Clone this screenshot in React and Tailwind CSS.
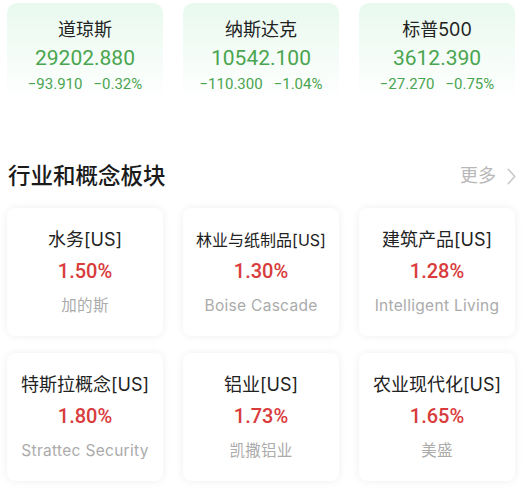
import React from 'react';

const indices = [
    { name: '道琼斯', value: '29202.880', change: '−93.910', pct: '−0.32%' },
    { name: '纳斯达克', value: '10542.100', change: '−110.300', pct: '−1.04%' },
    { name: '标普500', value: '3612.390', change: '−27.270', pct: '−0.75%' },
];

const sectors = [
    { name: '水务[US]', pct: '1.50%', lead: '加的斯' },
    { name: '林业与纸制品[US]', pct: '1.30%', lead: 'Boise Cascade', small: true },
    { name: '建筑产品[US]', pct: '1.28%', lead: 'Intelligent Living' },
    { name: '特斯拉概念[US]', pct: '1.80%', lead: 'Strattec Security' },
    { name: '铝业[US]', pct: '1.73%', lead: '凯撒铝业' },
    { name: '农业现代化[US]', pct: '1.65%', lead: '美盛' },
];

export default function App() {
    return (
        <div className="w-[526px] h-[490px] bg-white overflow-hidden font-['Inter','Noto_Sans_CJK_SC',sans-serif]">
            <div className="pl-[7px] pr-[11px] pt-[3px] flex gap-[20px]">
                {indices.map((it) => (
                    <div key={it.name} className="w-[156px] h-[97px] rounded-[10px] bg-gradient-to-b from-[#e8f9ee] to-white flex flex-col items-center pt-[15px]">
                        <div className="text-[18px] leading-[24px] text-[#222]">{it.name}</div>
                        <div className="mt-[2px] font-['Roboto',sans-serif] text-[21px] leading-[28px] text-[#4aa550]">{it.value}</div>
                        <div className="mt-[2px] font-['Roboto',sans-serif] text-[15px] leading-[20px] text-[#4aa550] flex gap-[11px]">
                            <span>{it.change}</span>
                            <span>{it.pct}</span>
                        </div>
                    </div>
                ))}
            </div>

            <div className="mt-[60px] pl-[8px] pr-[10px] h-[32px] flex items-center justify-between">
                <div className="text-[22.5px] leading-[32px] font-medium text-[#1a1a1a]">行业和概念板块</div>
                <div className="flex items-center gap-[11px] text-[#b8b8b8]">
                    <span className="text-[18px] leading-[32px]">更多</span>
                    <svg width="9" height="17" viewBox="0 0 9 17" fill="none">
                        <path d="M1.2 1.2 L7.8 8.5 L1.2 15.8" stroke="#c4c4c4" strokeWidth="1.4" strokeLinecap="round" strokeLinejoin="round" />
                    </svg>
                </div>
            </div>

            <div className="mt-[16px] pl-[7px] pr-[11px] grid grid-cols-3 gap-x-[20px] gap-y-[17px]">
                {sectors.map((s) => (
                    <div key={s.name} className="h-[128px] rounded-[8px] bg-white shadow-[0_0_8px_rgba(0,0,0,0.07)] flex flex-col items-center pt-[20px]">
                        <div className={`${s.small ? 'text-[16px]' : 'text-[18px]'} leading-[24px] text-[#222]`}>{s.name}</div>
                        <div className="mt-[7px] font-['Roboto',sans-serif] text-[20px] leading-[24px] font-medium text-[#d83c3c]">{s.pct}</div>
                        <div className="mt-[12px] text-[15.5px] leading-[22px] text-[#ababab] tracking-[0.3px]">{s.lead}</div>
                    </div>
                ))}
            </div>
        </div>
    );
}
